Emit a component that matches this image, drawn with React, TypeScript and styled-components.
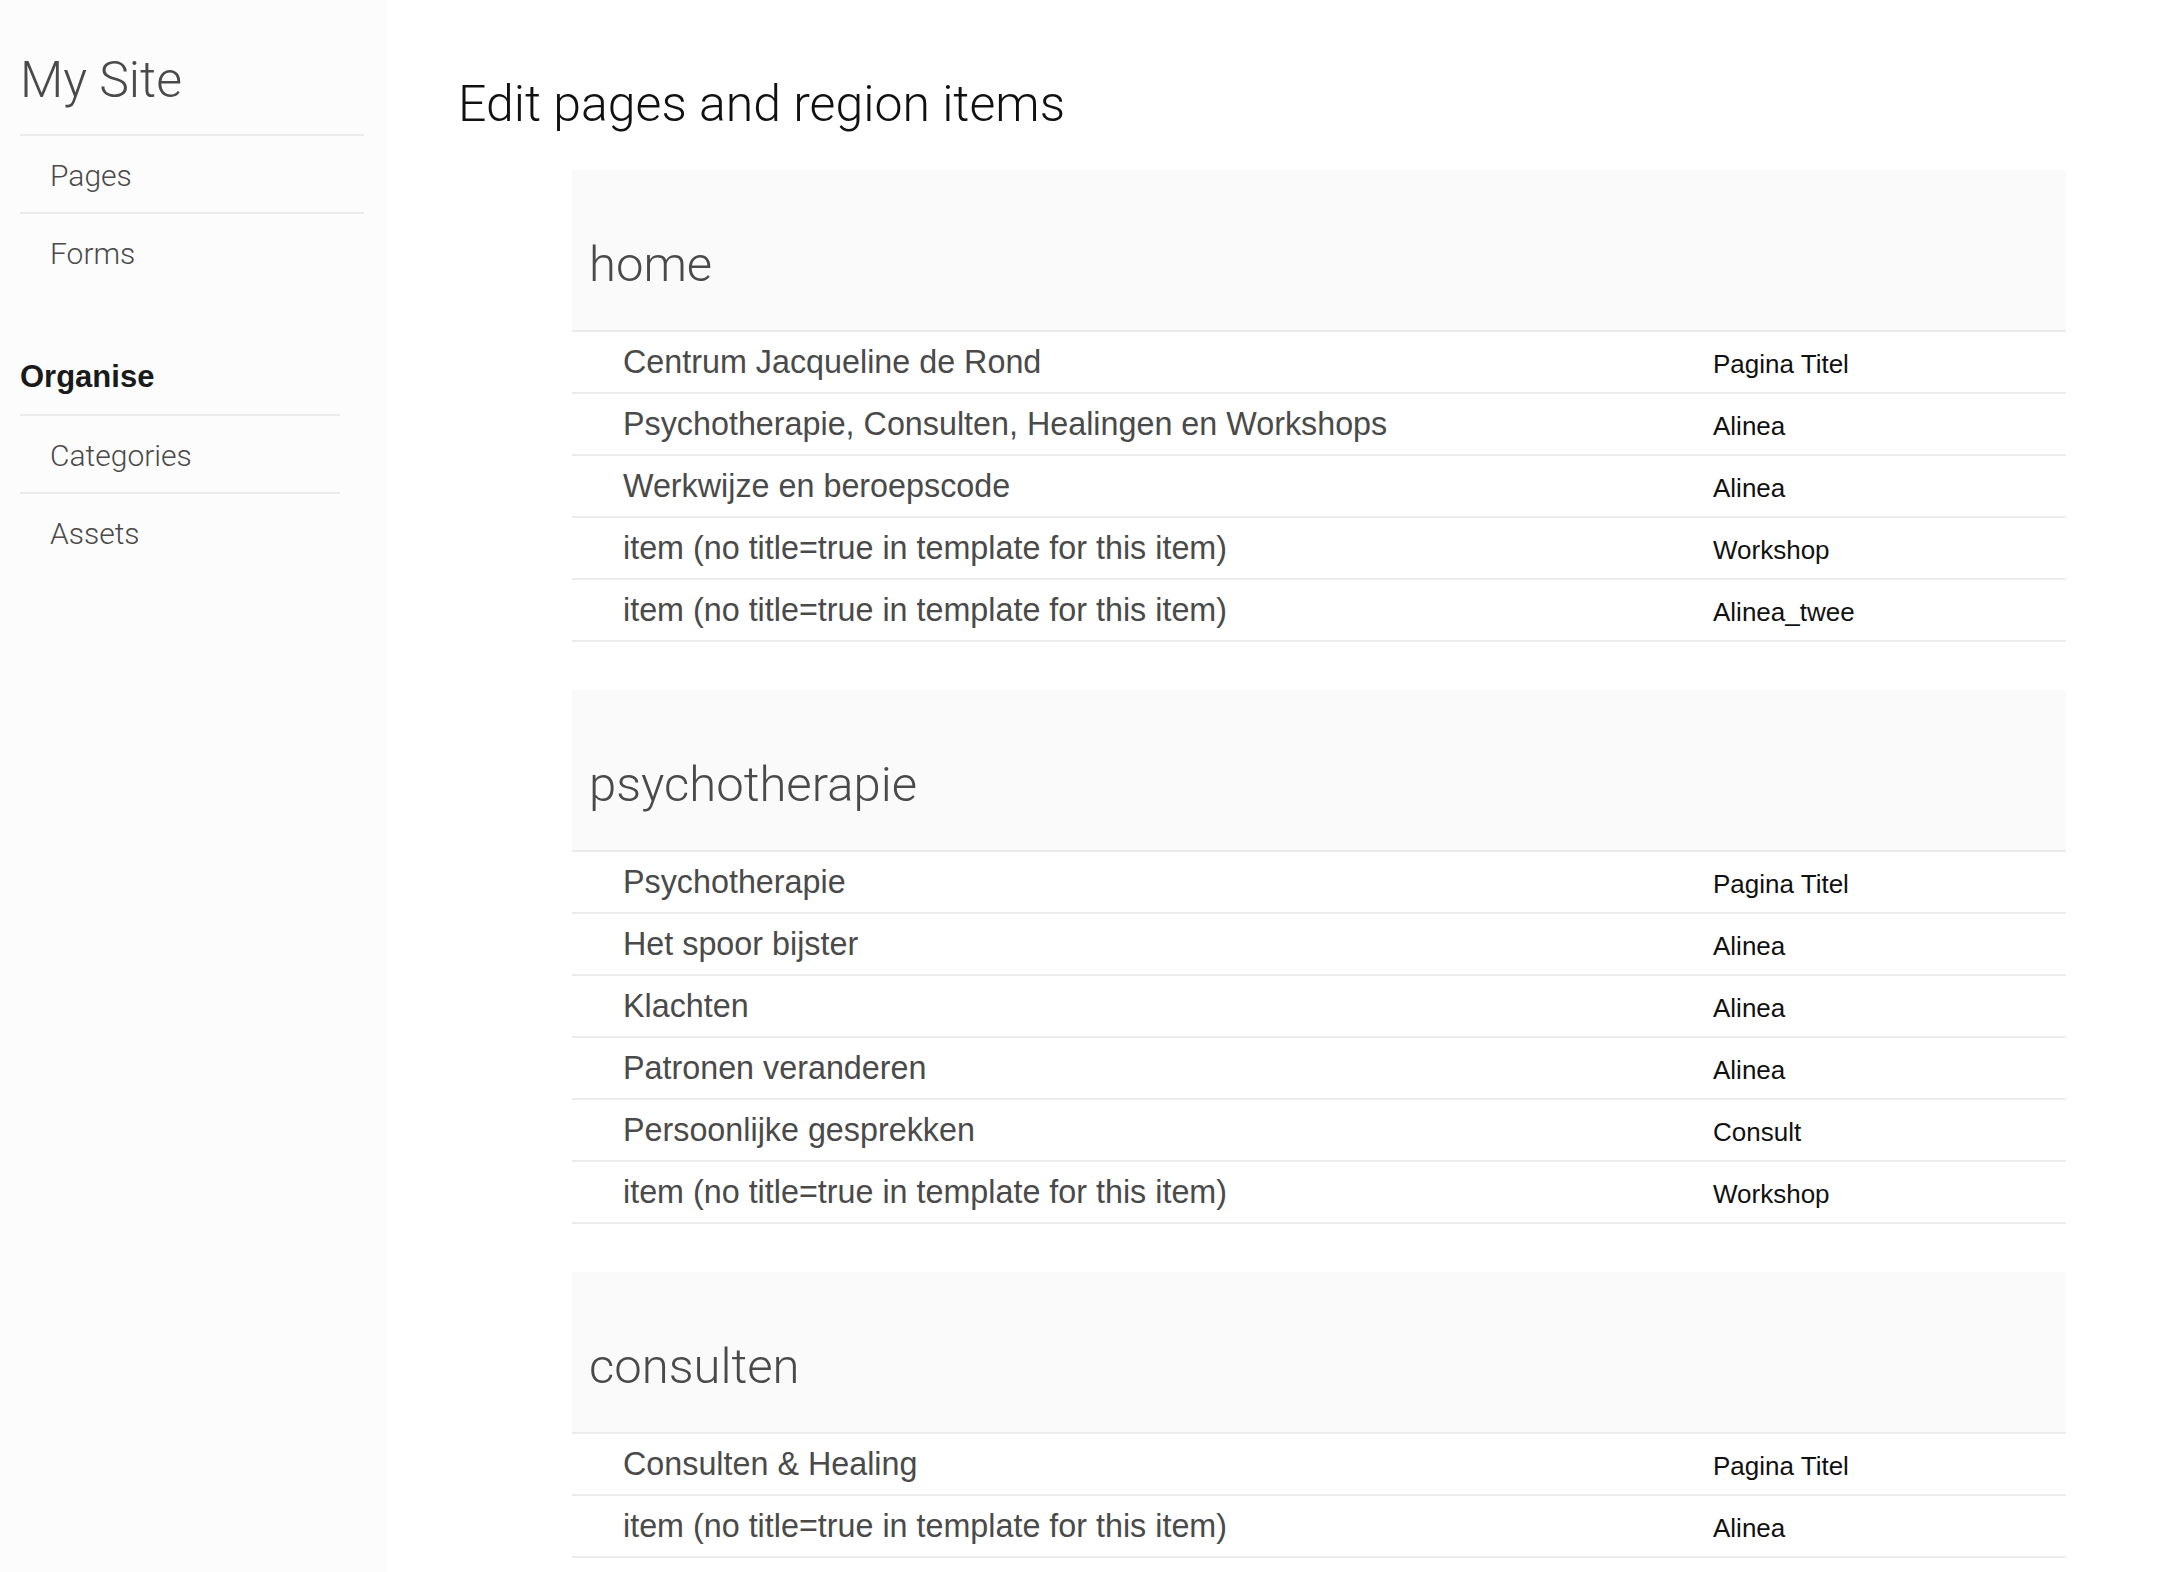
import styled, { createGlobalStyle } from "styled-components";

type RegionItem = { title: string; type: string };
type SitePage = { name: string; items: RegionItem[] };

const NO_TITLE = "item (no title=true in template for this item)";

const pages: SitePage[] = [
  {
    name: "home",
    items: [
      { title: "Centrum Jacqueline de Rond", type: "Pagina Titel" },
      { title: "Psychotherapie, Consulten, Healingen en Workshops", type: "Alinea" },
      { title: "Werkwijze en beroepscode", type: "Alinea" },
      { title: NO_TITLE, type: "Workshop" },
      { title: NO_TITLE, type: "Alinea_twee" },
    ],
  },
  {
    name: "psychotherapie",
    items: [
      { title: "Psychotherapie", type: "Pagina Titel" },
      { title: "Het spoor bijster", type: "Alinea" },
      { title: "Klachten", type: "Alinea" },
      { title: "Patronen veranderen", type: "Alinea" },
      { title: "Persoonlijke gesprekken", type: "Consult" },
      { title: NO_TITLE, type: "Workshop" },
    ],
  },
  {
    name: "consulten",
    items: [
      { title: "Consulten & Healing", type: "Pagina Titel" },
      { title: NO_TITLE, type: "Alinea" },
    ],
  },
];

const GlobalStyle = createGlobalStyle`
  * { box-sizing: border-box; }
  html, body {
    margin: 0;
    padding: 0;
    background: #ffffff;
    font-family: "Liberation Sans", Arial, sans-serif;
  }
`;

const App = () => {
  return (
    <>
      <GlobalStyle />
      <Layout>
        <Sidebar>
          <SiteTitle>My Site</SiteTitle>
          <NavList $width={344}>
            <NavItem>
              <NavLink href="#">Pages</NavLink>
            </NavItem>
            <NavItem>
              <NavLink href="#">Forms</NavLink>
            </NavItem>
          </NavList>
          <NavHeading>Organise</NavHeading>
          <NavList $width={320}>
            <NavItem>
              <NavLink href="#">Categories</NavLink>
            </NavItem>
            <NavItem>
              <NavLink href="#">Assets</NavLink>
            </NavItem>
          </NavList>
        </Sidebar>
        <Main>
          <PageTitle>Edit pages and region items</PageTitle>
          {pages.map((page) => (
            <PageSection key={page.name}>
              <SectionHeader>
                <SectionName>{page.name}</SectionName>
              </SectionHeader>
              {page.items.map((item, i) => (
                <ItemRow key={i}>
                  <ItemTitle>{item.title}</ItemTitle>
                  <ItemType>{item.type}</ItemType>
                </ItemRow>
              ))}
            </PageSection>
          ))}
        </Main>
      </Layout>
    </>
  );
};

export default App;

const Layout = styled.div`
  display: flex;
  min-height: 100vh;
`;

const Sidebar = styled.aside`
  flex: 0 0 386px;
  padding-left: 20px;
  background-color: #fcfcfc;
`;

const SiteTitle = styled.h1`
  margin: 52px 0 25px;
  font-family: Roboto, "Liberation Sans", sans-serif;
  font-weight: 300;
  font-size: 50px;
  line-height: 57px;
  color: #4a4a4a;
`;

const NavList = styled.ul<{ $width: number }>`
  margin: 0;
  padding: 0;
  list-style: none;
  width: ${(p) => p.$width}px;
`;

const NavItem = styled.li`
  border-top: 2px solid #ebebeb;
`;

const NavLink = styled.a`
  display: block;
  padding: 22px 0 18px 30px;
  font-family: Roboto, "Liberation Sans", sans-serif;
  font-weight: 300;
  font-size: 30px;
  line-height: 36px;
  color: #4a4a4a;
  text-decoration: none;
`;

const NavHeading = styled.h2`
  margin: 69px 0 19px;
  font-weight: 700;
  font-size: 31px;
  line-height: 36px;
  color: #1a1a1a;
`;

const Main = styled.main`
  flex: 1;
  padding: 75px 114px 0 0;
`;

const PageTitle = styled.h1`
  margin: 0 0 37px 72px;
  font-family: Roboto, "Liberation Sans", sans-serif;
  font-weight: 300;
  font-size: 50px;
  line-height: 58px;
  color: #111111;
`;

const PageSection = styled.section`
  margin-left: 186px;

  & + & {
    margin-top: 48px;
  }
`;

const SectionHeader = styled.div`
  padding: 67px 17px 37px;
  background-color: #fafafa;
  border-bottom: 2px solid #ebebeb;
`;

const SectionName = styled.h2`
  margin: 0;
  font-family: Roboto, "Liberation Sans", sans-serif;
  font-weight: 300;
  font-size: 49px;
  line-height: 56px;
  color: #4a4a4a;
`;

const ItemRow = styled.div`
  display: grid;
  grid-template-columns: 1fr 353px;
  align-items: baseline;
  height: 62px;
  padding: 11px 0;
  border-bottom: 2px solid #ebebeb;
`;

const ItemTitle = styled.span`
  padding-left: 51px;
  font-size: 32.3px;
  line-height: 38px;
  color: #4a4a4a;
`;

const ItemType = styled.span`
  font-size: 26px;
  line-height: 32px;
  color: #111111;
`;
